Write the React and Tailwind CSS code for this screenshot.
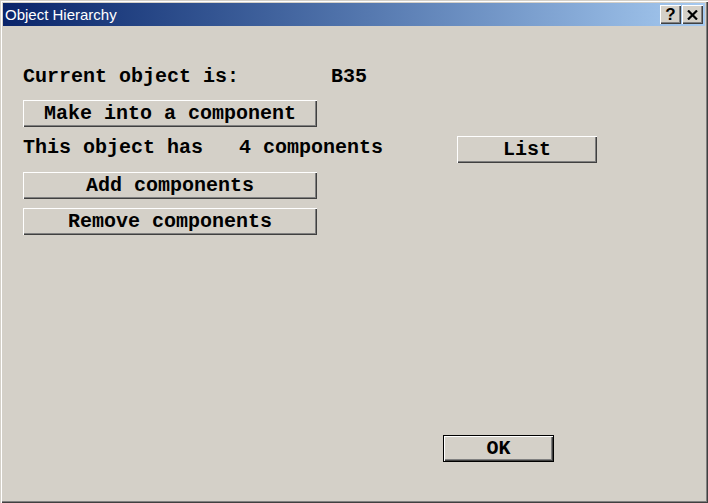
import React from 'react';

const mono = { fontFamily: '"Liberation Mono", "Courier New", monospace' };

function WinButton({ children, className = '', isDefault = false }) {
  return (
    <div
      className={
        'flex items-center justify-center bg-[#d4d0c8] text-[20px] font-bold text-black ' +
        (isDefault
          ? 'border border-black shadow-[inset_1px_1px_#fff,inset_-1px_-1px_#404040,inset_-2px_-2px_#808080] '
          : 'shadow-[inset_1px_1px_#fff,inset_-1px_-1px_#404040,inset_-2px_-2px_#808080] ') +
        className
      }
      style={mono}
    >
      {children}
    </div>
  );
}

function CaptionButton({ children }) {
  return (
    <div className="flex h-[19px] w-[21px] items-center justify-center bg-[#d4d0c8] shadow-[inset_1px_1px_#fff,inset_-1px_-1px_#404040,inset_-2px_-2px_#808080]">
      {children}
    </div>
  );
}

export default function App() {
  return (
    <div className="h-[503px] w-[708px] bg-[#d4d0c8] p-[3px] shadow-[inset_1px_1px_#d4d0c8,inset_2px_2px_#fff,inset_-1px_-1px_#404040,inset_-2px_-2px_#808080]">
      <div className="flex h-full flex-col">
        {/* Title bar */}
        <div className="flex h-[23px] items-center justify-between bg-gradient-to-r from-[#0a246a] to-[#a6caf0] pl-[2px] pr-[2px]">
          <span
            className="pt-[1px] text-[15px] text-white"
            style={{ fontFamily: 'Tahoma, "Liberation Sans", sans-serif' }}
          >
            Object Hierarchy
          </span>
          <div className="flex gap-[1px]">
            <CaptionButton>
              <span
                className="text-[17px] font-bold leading-none text-black"
                style={{ fontFamily: '"Liberation Sans", sans-serif' }}
              >
                ?
              </span>
            </CaptionButton>
            <CaptionButton>
              <svg width="11" height="10" viewBox="0 0 11 10">
                <path d="M1 0.5 L10 9.5 M10 0.5 L1 9.5" stroke="#000" strokeWidth="2.2" />
              </svg>
            </CaptionButton>
          </div>
        </div>

        {/* Body */}
        <div className="flex flex-1 flex-col pl-[20px]">
          <div className="mt-[41px] flex h-[20px] items-center text-[20px] font-bold text-black" style={mono}>
            <span className="w-[308px]">Current object is:</span>
            <span>B35</span>
          </div>

          <WinButton className="mt-[13px] h-[27px] w-[294px]">Make into a component</WinButton>

          <div className="mt-[9px] flex h-[27px]">
            <div
              className="flex h-[24px] w-[434px] items-center whitespace-pre text-[20px] font-bold text-black"
              style={mono}
            >
              {'This object has   4 components'}
            </div>
            <WinButton className="h-[27px] w-[140px]">List</WinButton>
          </div>

          <WinButton className="mt-[9px] h-[27px] w-[294px]">Add components</WinButton>
          <WinButton className="mt-[9px] h-[27px] w-[294px]">Remove components</WinButton>

          <div className="mt-auto mb-[38px] pl-[420px]">
            <WinButton isDefault className="h-[27px] w-[111px]">OK</WinButton>
          </div>
        </div>
      </div>
    </div>
  );
}
